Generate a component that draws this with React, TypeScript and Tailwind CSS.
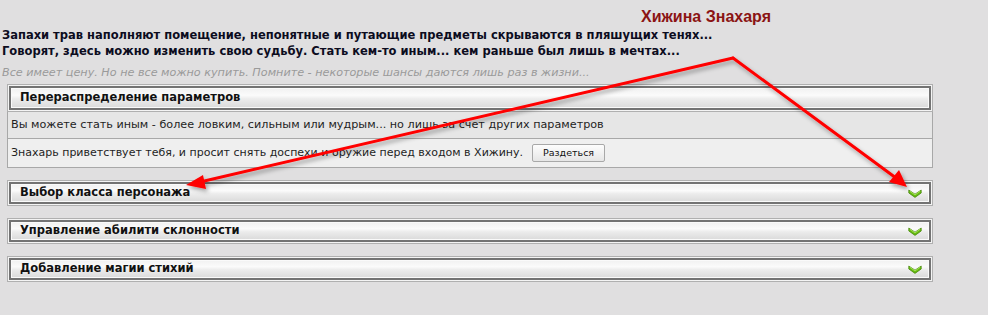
import React from "react";

function Chevron() {
  return (
    <svg width="14" height="9" viewBox="0 0 14 9" className="block">
      <path d="M0.8 1 L7 5.2 L13.2 1 L13.2 4 L7 8.4 L0.8 4 Z" fill="#68bd12" stroke="#3f7d06" strokeWidth="0.7" strokeLinejoin="round" />
      <path d="M1.8 2.2 L7 5.8 L12.2 2.2" fill="none" stroke="#b4ec6a" strokeWidth="0.8" />
    </svg>
  );
}

function Header({ title, chevron, inner }: { title: string; chevron?: boolean; inner: string }) {
  return (
    <div className="border border-[#b0b0b0] bg-[#f4f4f4] p-px">
      <div className="border-2 border-[#737373]">
        <div
          className={`${inner} flex items-center justify-between pl-[8px] pr-[6px] border border-[#fafafa] bg-[linear-gradient(to_bottom,#f2f2f2_0%,#fbfbfb_35%,#ececec_55%,#dcdcdc_100%)]`}
        >
          <span className="font-['DejaVu_Sans',sans-serif] font-bold text-[11.5px] text-[#111] leading-none">{title}</span>
          {chevron ? <Chevron /> : null}
        </div>
      </div>
    </div>
  );
}

export default function App() {
  return (
    <div className="relative w-[988px] h-[315px] bg-[#e0dfe0] overflow-hidden font-['DejaVu_Sans',sans-serif]">
      <div className="pl-[641px] pt-[7px] h-[27px] font-['Liberation_Sans',sans-serif] font-bold text-[16px] leading-[20px] text-[#8b1414]">
        Хижина Знахаря
      </div>
      <div className="pl-[2px] font-bold text-[11.5px] leading-[16px] text-[#0c0c1e]">
        <div>Запахи трав наполняют помещение, непонятные и путающие предметы скрываются в пляшущих тенях...</div>
        <div>Говорят, здесь можно изменить свою судьбу. Стать кем-то иным... кем раньше был лишь в мечтах...</div>
      </div>
      <div className="pl-[2px] pt-[7px] italic text-[11.2px] leading-[14px] text-[#9a9a9a]">
        Все имеет цену. Но не все можно купить. Помните - некоторые шансы даются лишь раз в жизни...
      </div>

      <div className="ml-[7px] w-[926px] mt-[4px] flex flex-col">
        <Header title="Перераспределение параметров" inner="h-[20px]" />
        <div className="border-x border-b border-[#a8a8a8] bg-[#e6e6e6] h-[27px] flex items-center pl-[3px] text-[11.2px] text-[#1e1e1e]">
          Вы можете стать иным - более ловким, сильным или мудрым... но лишь за счет других параметров
        </div>
        <div className="border-x border-b border-[#a8a8a8] bg-[#efefef] h-[29px] flex items-center pl-[3px] text-[11px] text-[#1e1e1e]">
          <span>Знахарь приветствует тебя, и просит снять доспехи и оружие перед входом в Хижину.</span>
          <button className="ml-[9px] w-[73px] h-[18px] border border-[#a8a8a8] rounded-[2px] bg-[linear-gradient(to_bottom,#fdfdfd,#e6e6e6)] text-[9.5px] text-[#111] leading-none flex items-center justify-center">
            Раздеться
          </button>
        </div>

        <div className="mt-[12px]">
          <Header title="Выбор класса персонажа" chevron inner="h-[18px]" />
        </div>
        <div className="mt-[12px]">
          <Header title="Управление абилити склонности" chevron inner="h-[18px]" />
        </div>
        <div className="mt-[12px]">
          <Header title="Добавление магии стихий" chevron inner="h-[18px]" />
        </div>
      </div>

      <svg className="absolute inset-0 pointer-events-none" width="988" height="315">
        <defs>
          <filter id="sh" x="-10%" y="-10%" width="120%" height="130%">
            <feDropShadow dx="2" dy="3" stdDeviation="2" floodColor="#000" floodOpacity="0.35" />
          </filter>
        </defs>
        <g filter="url(#sh)">
          <line x1="733" y1="58" x2="200" y2="182" stroke="#ff0000" strokeWidth="3" strokeLinecap="round" />
          <polygon points="186,185 203,175 206,189" fill="#ff0000" />
          <line x1="733" y1="58" x2="896" y2="178" stroke="#ff0000" strokeWidth="3" strokeLinecap="round" />
          <polygon points="907,187 889,182 899,170" fill="#ff0000" />
        </g>
      </svg>
    </div>
  );
}
